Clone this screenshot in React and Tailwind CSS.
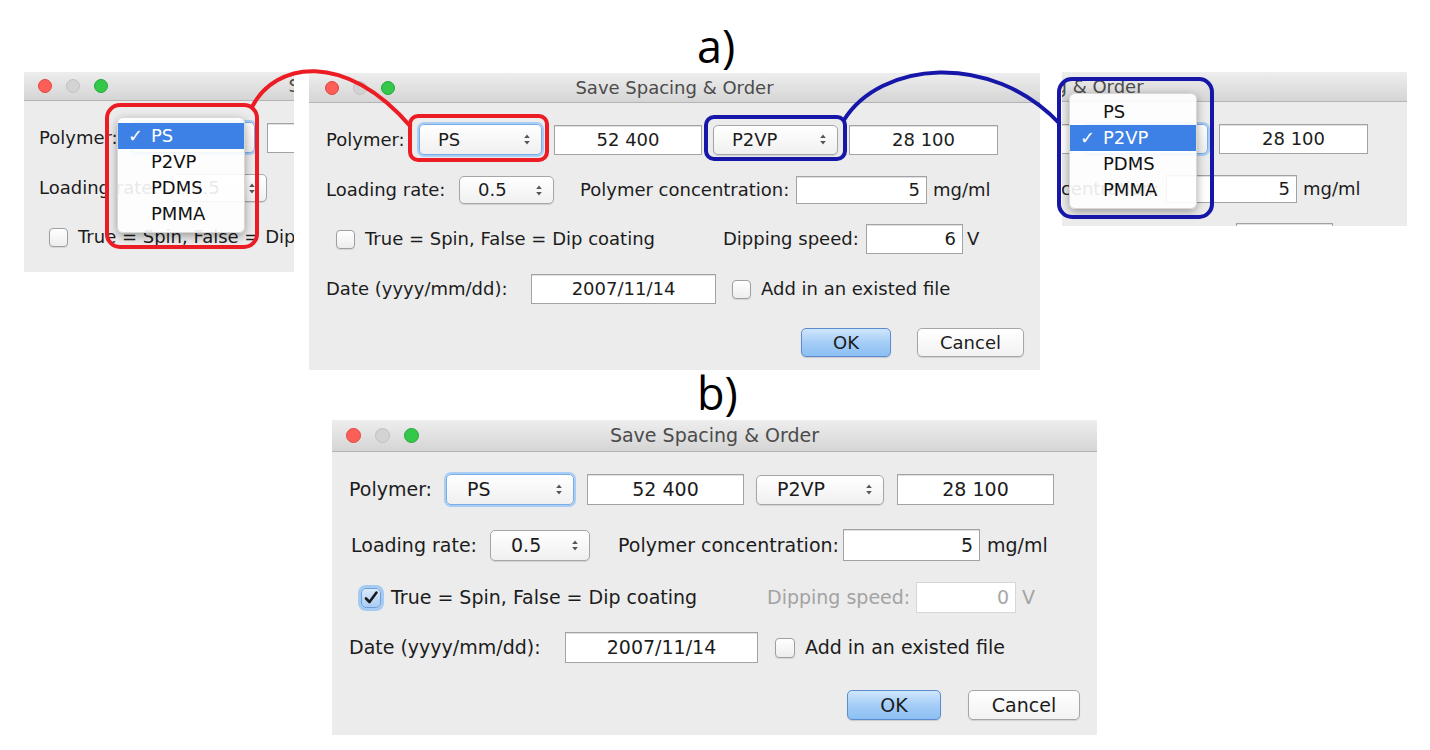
import React from 'react';

const A = {
  win: 'w-[731px] h-[297px] text-[18px]',
  title: 'h-[30px]',
  lights: 'pl-[16px] gap-[14px]',
  dot: 'w-[14px] h-[14px]',
  body: 'pl-[17px]',
  r1: 'mt-[21px] h-[31px]',
  polyLabel: 'w-[93px]',
  sel1: 'w-[123px] h-[31px]',
  selPad: 'pl-[18px] pr-[10px]',
  in1: 'ml-[12px] w-[148px] h-[30px]',
  sel2: 'ml-[11px] w-[125px] h-[30px]',
  in2: 'ml-[11px] w-[149px] h-[30px]',
  r2: 'mt-[21px] h-[28px]',
  loadLabel: 'w-[133px]',
  sel3: 'w-[95px] h-[28px]',
  concLabel: 'ml-[26px] w-[216px]',
  in3: 'w-[131px] h-[28px]',
  unit: 'ml-[6px]',
  r3: 'mt-[20px] h-[30px]',
  cb1: 'ml-[10px]',
  cbSize: 'w-[19px] h-[19px]',
  spinText: 'ml-[10px] w-[358px]',
  dipLabel: 'w-[143px]',
  in4: 'w-[97px] h-[30px]',
  v: 'ml-[4px]',
  r4: 'mt-[20px] h-[30px]',
  dateLabel: 'w-[205px]',
  in5: 'w-[185px] h-[30px]',
  cb2: 'ml-[16px]',
  addText: 'ml-[10px]',
  r5: 'mt-[24px] h-[29px] pr-[16px] gap-[26px]',
  ok: 'w-[90px]',
  cancel: 'w-[107px]',
};

const B = {
  win: 'w-[765px] h-[315px] text-[19px]',
  title: 'h-[32px]',
  lights: 'pl-[14px] gap-[14px]',
  dot: 'w-[15px] h-[15px]',
  body: 'pl-[17px]',
  r1: 'mt-[22px] h-[31px]',
  polyLabel: 'w-[97px]',
  sel1: 'w-[128px] h-[31px]',
  selPad: 'pl-[20px] pr-[10px]',
  in1: 'ml-[13px] w-[157px] h-[31px]',
  sel2: 'ml-[12px] w-[128px] h-[30px]',
  in2: 'ml-[13px] w-[157px] h-[31px]',
  r2: 'mt-[24px] h-[32px]',
  loadLabel: 'pl-[2px] w-[141px]',
  sel3: 'w-[100px] h-[31px]',
  concLabel: 'ml-[28px] w-[225px]',
  in3: 'w-[137px] h-[32px]',
  unit: 'ml-[7px]',
  r3: 'mt-[21px] h-[31px]',
  cb1: 'ml-[12px]',
  cbSize: 'w-[20px] h-[20px]',
  spinText: 'ml-[10px] w-[376px]',
  dipLabel: 'w-[149px]',
  in4: 'w-[100px] h-[31px]',
  v: 'ml-[6px]',
  r4: 'mt-[19px] h-[31px]',
  dateLabel: 'w-[216px]',
  in5: 'w-[193px] h-[31px]',
  cb2: 'ml-[17px]',
  addText: 'ml-[10px]',
  r5: 'mt-[27px] h-[30px] pr-[17px] gap-[27px]',
  ok: 'w-[94px]',
  cancel: 'w-[112px]',
};

function Arrows() {
  return (
    <svg width="8" height="13" viewBox="0 0 8 13" className="shrink-0">
      <path d="M4 1.5 L6.8 5 H1.2 Z" fill="#555" />
      <path d="M4 11.5 L6.8 8 H1.2 Z" fill="#555" />
    </svg>
  );
}

function Select({ value, size, pad, focused }) {
  return (
    <div
      className={`${size} ${pad} shrink-0 flex items-center justify-between rounded-[5px] bg-linear-to-b from-white to-[#f0f0f0] border ${
        focused
          ? 'border-[#78ade6] shadow-[0_0_0_2px_#a9cdf4]'
          : 'border-[#a6a6a6] shadow-[0_1px_1px_rgba(0,0,0,0.12)]'
      }`}
    >
      <span className="whitespace-nowrap">{value}</span>
      <Arrows />
    </div>
  );
}

function Field({ size, value, right, disabled }) {
  return (
    <div
      className={`${size} shrink-0 bg-white border flex items-center ${
        right ? 'justify-end pr-[6px]' : 'justify-center'
      } ${disabled ? 'border-[#d6d6d6] text-[#a8a8a8]' : 'border-[#a3a3a3] shadow-[inset_0_1px_0_#e0e0e0]'}`}
    >
      <span className="whitespace-nowrap">{value}</span>
    </div>
  );
}

function Check({ size, checked }) {
  if (checked) {
    return (
      <div
        className={`${size} shrink-0 rounded-[5px] border border-[#6c9fd9] bg-linear-to-b from-[#d9eafc] to-[#a9cbf2] shadow-[0_0_0_3px_#a6cbf2] flex items-center justify-center`}
      >
        <svg width="16" height="16" viewBox="0 0 16 16">
          <path d="M3 8.5 L6.5 12 L13.5 2.5" fill="none" stroke="#1b1b1b" strokeWidth="2.6" strokeLinecap="round" strokeLinejoin="round" />
        </svg>
      </div>
    );
  }
  return (
    <div
      className={`${size} shrink-0 rounded-[4px] border border-[#9f9f9f] bg-linear-to-b from-white to-[#ededed] shadow-[0_1px_1px_rgba(0,0,0,0.1)]`}
    />
  );
}

function Dialog({ t, focus, spinChecked, dipDisabled, dipValue }) {
  return (
    <div
      className={`${t.win} shrink-0 bg-[#ececec] flex flex-col font-['DejaVu_Sans',sans-serif] text-[#1c1c1c] leading-none`}
    >
      <div
        className={`${t.title} shrink-0 grid grid-cols-[1fr_auto_1fr] items-center bg-linear-to-b from-[#eeeeee] to-[#d5d5d5] border-b border-[#b4b4b4]`}
      >
        <div className={`flex items-center ${t.lights}`}>
          <span className={`${t.dot} rounded-full bg-[#fc5f57] border border-[#e2463f]`} />
          <span className={`${t.dot} rounded-full bg-[#d3d3d3] border border-[#c2c2c2]`} />
          <span className={`${t.dot} rounded-full bg-[#34c749] border border-[#26a93a]`} />
        </div>
        <div className="text-[#4b4b4b] whitespace-nowrap">Save Spacing &amp; Order</div>
        <div />
      </div>
      <div className={`flex flex-col ${t.body}`}>
        <div className={`flex items-center ${t.r1}`}>
          <span className={`${t.polyLabel} shrink-0 whitespace-nowrap`}>Polymer:</span>
          <Select value="PS" size={t.sel1} pad={t.selPad} focused={focus === 'ps'} />
          <Field size={t.in1} value="52 400" />
          <Select value="P2VP" size={t.sel2} pad={t.selPad} focused={focus === 'p2vp'} />
          <Field size={t.in2} value="28 100" />
        </div>
        <div className={`flex items-center ${t.r2}`}>
          <span className={`${t.loadLabel} shrink-0 whitespace-nowrap`}>Loading rate:</span>
          <Select value="0.5" size={t.sel3} pad={t.selPad} />
          <span className={`${t.concLabel} shrink-0 whitespace-nowrap`}>Polymer concentration:</span>
          <Field size={t.in3} value="5" right />
          <span className={`${t.unit} whitespace-nowrap`}>mg/ml</span>
        </div>
        <div className={`flex items-center ${t.r3}`}>
          <div className={t.cb1}>
            <Check size={t.cbSize} checked={spinChecked} />
          </div>
          <span className={`${t.spinText} shrink-0 whitespace-nowrap`}>True = Spin, False = Dip coating</span>
          <span className={`${t.dipLabel} shrink-0 whitespace-nowrap ${dipDisabled ? 'text-[#a3a3a3]' : ''}`}>
            Dipping speed:
          </span>
          <Field size={t.in4} value={dipValue} right disabled={dipDisabled} />
          <span className={`${t.v} ${dipDisabled ? 'text-[#a3a3a3]' : ''}`}>V</span>
        </div>
        <div className={`flex items-center ${t.r4}`}>
          <span className={`${t.dateLabel} shrink-0 whitespace-nowrap`}>Date (yyyy/mm/dd):</span>
          <Field size={t.in5} value="2007/11/14" />
          <div className={t.cb2}>
            <Check size={t.cbSize} />
          </div>
          <span className={`${t.addText} whitespace-nowrap`}>Add in an existed file</span>
        </div>
        <div className={`flex items-center justify-end ${t.r5}`}>
          <div
            className={`${t.ok} h-full flex items-center justify-center rounded-[5px] border border-[#5b8ccf] bg-linear-to-b from-[#cfe6fc] via-[#a5cdf6] to-[#8cbff3] shadow-[0_1px_1px_rgba(0,0,0,0.15)]`}
          >
            OK
          </div>
          <div
            className={`${t.cancel} h-full flex items-center justify-center rounded-[5px] border border-[#a6a6a6] bg-linear-to-b from-white to-[#f2f2f2] shadow-[0_1px_1px_rgba(0,0,0,0.12)]`}
          >
            Cancel
          </div>
        </div>
      </div>
    </div>
  );
}

function Menu({ sel, pos }) {
  const items = ['PS', 'P2VP', 'PDMS', 'PMMA'];
  return (
    <div
      className={`absolute ${pos} w-[128px] py-[5px] rounded-[6px] bg-white/90 shadow-[0_3px_10px_rgba(0,0,0,0.35)] border border-[#d8d8d8] font-['DejaVu_Sans',sans-serif] text-[18px] leading-none text-[#111]`}
    >
      {items.map((it) => (
        <div
          key={it}
          className={`h-[26px] flex items-center ${sel === it ? 'bg-[#3d80e6] text-white' : ''}`}
        >
          <span className="w-[33px] pl-[10px] shrink-0 font-bold">{sel === it ? '✓' : ''}</span>
          <span>{it}</span>
        </div>
      ))}
    </div>
  );
}

export default function App() {
  return (
    <div className="relative w-[1430px] h-[750px] bg-white overflow-hidden">
      {/* left cropped window */}
      <div className="absolute left-[24px] top-[72px] w-[270px] h-[200px] overflow-hidden">
        <div className="ml-[-2px] mt-[-1px]">
          <Dialog t={A} focus="ps" dipValue="6" />
        </div>
      </div>
      <Menu sel="PS" pos="left-[117px] top-[117px]" />

      {/* main window a */}
      <div className="absolute left-[309px] top-[73px]">
        <Dialog t={A} focus="ps" dipValue="6" />
      </div>

      {/* right cropped window */}
      <div className="absolute left-[1062px] top-[72px] w-[345px] h-[154px] overflow-hidden">
        <div className="ml-[-383px]">
          <Dialog t={A} focus="p2vp" dipValue="6" />
        </div>
      </div>
      <Menu sel="P2VP" pos="left-[1069px] top-[93px]" />

      {/* window b */}
      <div className="absolute left-[332px] top-[420px]">
        <Dialog t={B} focus="ps" spinChecked dipDisabled dipValue="0" />
      </div>

      {/* labels */}
      <div className="absolute left-[697px] top-[23px] font-['Open_Sans',sans-serif] text-[45px] leading-none text-black">
        a)
      </div>
      <div className="absolute left-[697px] top-[370px] font-['Open_Sans',sans-serif] text-[45px] leading-none text-black">
        b)
      </div>

      {/* annotations */}
      <svg className="absolute left-0 top-0 pointer-events-none" width="1430" height="750">
        <rect x="107" y="105" width="150" height="142" rx="13" fill="none" stroke="#ec1c24" strokeWidth="4" />
        <rect x="410" y="116" width="137" height="44" rx="8" fill="none" stroke="#ec1c24" strokeWidth="4" />
        <path d="M252 107 C 275 62, 345 50, 411 127" fill="none" stroke="#ec1c24" strokeWidth="4" />
        <rect x="706" y="117" width="139" height="42" rx="8" fill="none" stroke="#1616a8" strokeWidth="4" />
        <rect x="1059" y="79" width="153" height="138" rx="13" fill="none" stroke="#1616a8" strokeWidth="4" />
        <path d="M844 120 C 880 62, 990 50, 1060 124" fill="none" stroke="#1616a8" strokeWidth="4" />
      </svg>
    </div>
  );
}
